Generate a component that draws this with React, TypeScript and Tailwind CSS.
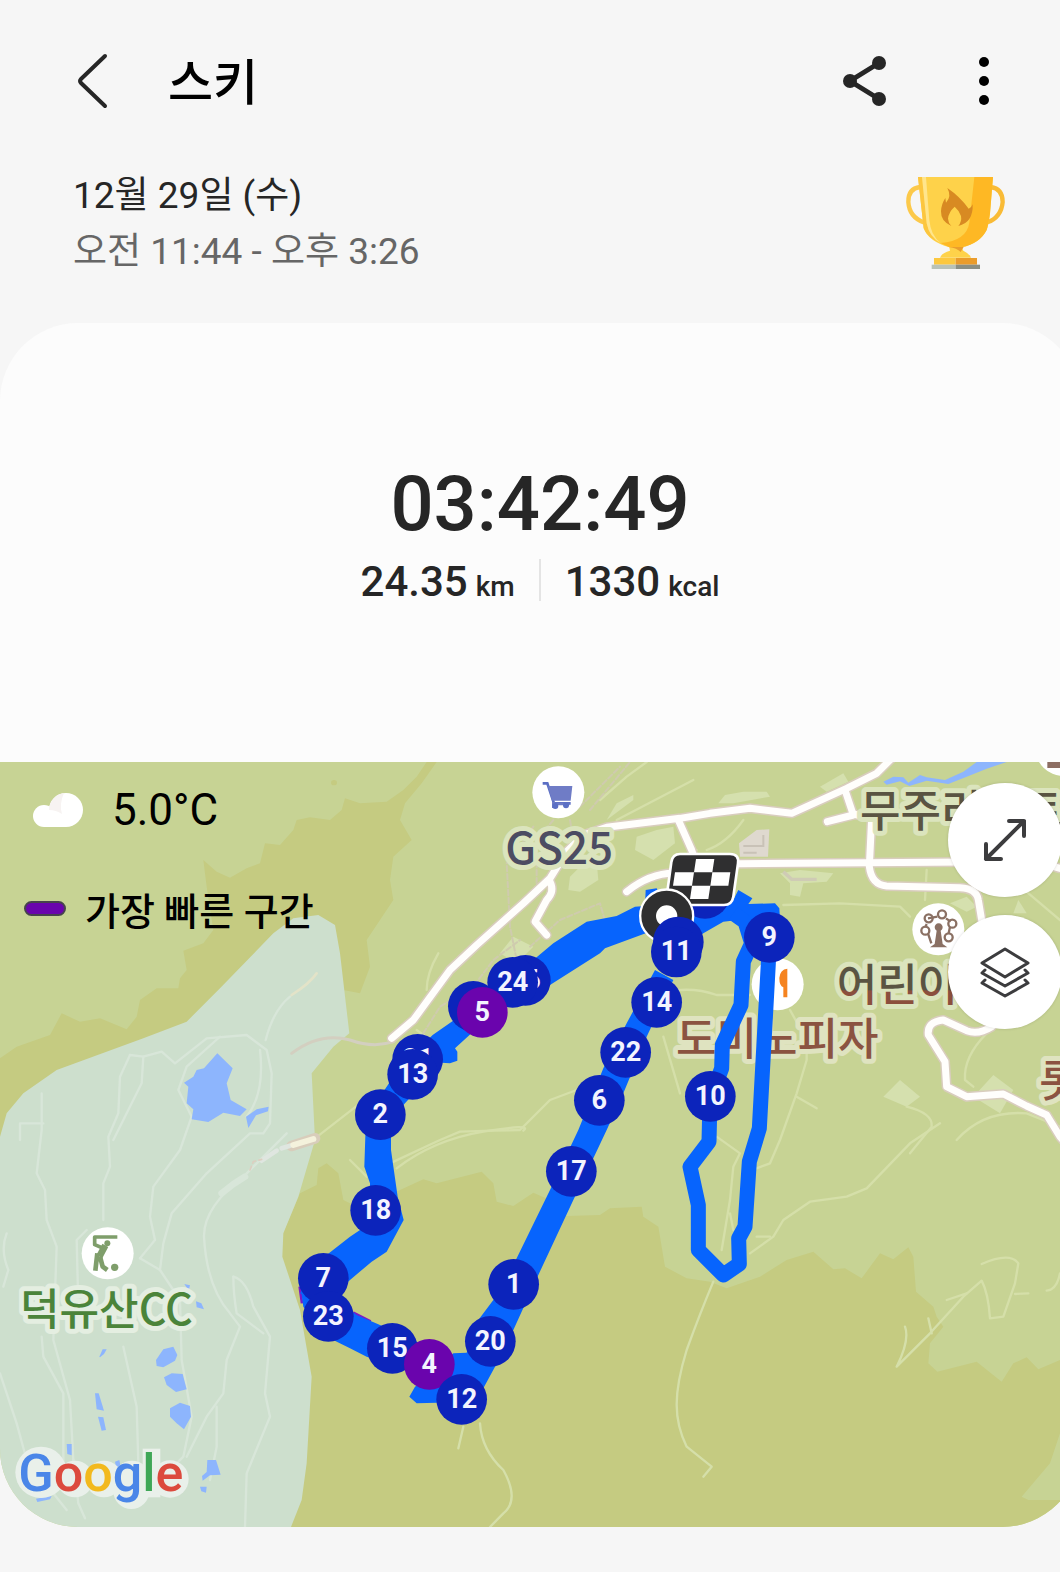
import React from "react";

/* The map is drawn on a canvas of 3240 x 2295 units, three units to a pixel. */

type Poly = string;

const KHAKI: Poly[] = [
  "0,955 50,920 150,885 185,820 240,845 300,835 380,868 410,830 420,780 470,745 535,745 540,715 560,690 550,632 610,610 640,570 620,440 610,360 650,395 690,413 740,385 780,370 795,310 840,315 880,270 890,240 930,232 990,240 1025,210 1035,175 1080,190 1160,185 1210,150 1250,110 1280,66 1310,66 1265,130 1215,190 1200,240 1235,300 1180,350 1170,420 1180,480 1140,540 1100,600 1110,680 1080,760 1030,750 900,1000 0,1250",
  "840,1500 900,1360 950,1335 955,1285 980,1270 1015,1300 1030,1380 1080,1405 1200,1350 1270,1318 1310,1330 1445,1295 1480,1330 1490,1385 1540,1398 1600,1358 1650,1380 1700,1428 1800,1425 1830,1405 1925,1400 1930,1430 1975,1460 1995,1580 2060,1615 2130,1625 2180,1645 2280,1610 2360,1560 2440,1535 2500,1588 2535,1585 2585,1615 2640,1540 2680,1558 2725,1522 2740,1550 2748,1655 2800,1700 2810,1730 2830,1760 2790,1810 2785,1870 2812,1895 2930,1865 3005,1925 3040,1870 3080,1852 3115,1888 3180,1860 3240,1850 3240,2361 870,2361 840,2300",
];

const GOLF: Poly =
  "0,1190 20,1120 70,1060 170,990 430,895 560,845 660,745 820,580 880,535 955,525 1005,555 1020,640 1048,880 1000,920 935,1000 945,1200 895,1370 850,1480 847,1550 900,1710 935,1910 920,2170 905,2280 873,2361 0,2361";

const GROVES: Poly[] = [
  "1820,240 1900,180 1900,165 1850,190",
  "1910,290 1970,270 2020,260 2025,310 1960,360 1905,330",
  "1710,410 1740,380 1790,365 1795,420 1740,455 1705,450",
  "1500,640 1540,590 1600,620 1550,670",
  "2155,190 2175,165 2230,155 2300,155 2310,170 2200,190",
  "2460,140 2530,100 2545,125 2480,155",
  "2340,400 2400,390 2500,400 2480,425 2410,430 2400,470 2370,465 2370,430",
  "2650,1070 2700,1020 2760,1070 2720,1100",
  "2920,1070 2980,1005 3040,1050 3000,1120",
  "2850,490 2900,470 2930,500 2900,515",
  "3040,520 3055,480 3080,520",
];

const TRAILS = [
  "M1380 895 L1290 900 1250 870",
  "M1190 1285 Q1300 1200 1450 1175 T1570 1172",
  "M1050 1260 L1100 1310",
  "M945 1195 L1080 1090 1130 1060",
  "M1170 1270 L1320 1200 1380 1175 1480 1172 1560 1170 1650 1080 1730 1050",
  "M1280 750 Q1280 700 1315 640",
  "M1990 890 L2040 1060",
  "M2000 755 Q2080 740 2150 765 L2250 765",
  "M2350 495 L2520 490 2700 500 2730 530",
  "M2230 240 Q2180 310 2120 330",
  "M2370 810 L2420 900 2420 960 2390 1060 2340 1200 2310 1270 2270 1285",
  "M2390 1070 L2450 1105",
  "M2150 1190 L2220 1240 2200 1280 2190 1380 2165 1530 M2190 1420 L2200 1470",
  "M2250 1540 L2320 1490 2350 1440 2430 1385 2540 1370 2600 1345 2730 1210 2820 1150",
  "M2270 1490 L2310 1490",
  "M2140 1625 Q2100 1720 2060 1830 C2020 1960 2020 2040 2060 2120 Q2110 2160 2135 2180 L2110 2210",
  "M1440 2050 Q1445 2130 1510 2190 Q1560 2280 1510 2320 L1470 2361",
  "M1390 2060 L1375 2125",
  "M2715 1760 Q2730 1800 2690 1880 L2790 1780 2890 1670 2945 1622 Q2965 1660 2970 1735 L3010 1730 3045 1630 3055 1570 Q3030 1535 2945 1572",
  "M2840 1680 L2900 1660 M2785 1735 L2795 1780 M3045 1662 L3085 1660",
  "M3180 1600 Q3170 1650 3140 1652",
  "M2960 880 Q2890 950 2895 1020 L2920 1040",
  "M2720 1100 Q2800 1120 2795 1160 L2730 1240",
  "M2870 1200 Q2950 1110 3080 1120 L3180 1160",
  "M1800 180 L1880 110 1940 66 M1850 240 L2080 120",
  "M2050 370 L2090 330 M2780 390 L2775 480",
  "M3050 430 L3180 540",
];

const DASHED = [
  "M1740 200 L1860 80 M1770 210 L1890 66",
  "M1600 260 L1560 320 1520 370 1530 560 1550 660",
  "M1660 240 L1610 300 1610 430 M1710 240 L1720 300",
  "M1270 880 L1320 800 1420 740 1480 660 1560 600",
  "M1590 620 L1680 540 1800 490 1820 560",
];

const GOLF_PATHS = [
  "M60 1200 V1150 H130 M125 1060 V1170 L110 1300 135 1350 140 1440 170 1520 160 1800 210 1980 220 2160",
  "M390 945 L360 1010 355 1120 325 1190 330 1280 310 1330 310 1440",
  "M430 950 L425 1030 380 1120 340 1200",
  "M390 945 L430 950 485 935 525 970 620 895 740 885 800 930 815 1000 810 1150 790 1180 750 1180 620 1300 515 1420 490 1510 480 1590 420 1555",
  "M660 890 L560 980 535 1050 575 1130 540 1230 460 1340 450 1430 465 1500 420 1555",
  "M780 930 Q795 1060 740 1130",
  "M797 900 Q820 810 870 770",
  "M860 1180 L740 1300 Q610 1400 612 1490 Q620 1640 690 1720 L720 1760 680 1860 670 1960 620 2030 560 2150",
  "M700 1610 Q740 1620 760 1700 L810 1790 795 1960 810 2030 740 2200 735 2361",
  "M700 1610 Q700 1660 710 1720 L790 1780",
  "M125 1790 L130 1850 190 1960 190 2200",
  "M370 1820 L410 2000 415 2170",
  "M480 1590 L540 1680 545 1860 575 2030 550 2150 500 2200",
  "M20 1480 Q0 1530 25 1590 L10 1640",
  "M0 1900 L50 2050 80 2160 200 2310",
  "M235 1700 L230 1500 260 1470",
  "M220 2160 L235 2290 255 2335",
  "M650 2000 L650 2120 630 2220",
];

const LAKES: Poly[] = [
  "652,940 698,985 680,1030 692,1080 740,1108 720,1128 670,1118 625,1146 575,1138 580,1108 560,1090 565,1040 552,1028 580,1010 590,990 612,985",
  "738,1130 770,1108 806,1100 804,1114 768,1126 745,1164",
  "468,1860 490,1828 520,1820 532,1845 525,1862 490,1882 470,1878",
  "492,1912 515,1900 548,1902 560,1948 528,1956 500,1935",
  "510,2005 540,1988 570,1998 573,2030 552,2068 530,2050 510,2030",
  "285,1960 296,1960 312,2012 290,2008",
  "294,2030 310,2032 318,2070 305,2072",
  "298,1850 308,1828 320,1828 312,1842 300,1852",
  "200,2112 215,2112 215,2146 202,2142",
  "622,2160 648,2160 662,2204 630,2206 608,2222 606,2208 620,2196",
  "600,2240 620,2240 618,2258 604,2254",
  "345,2165 358,2160 362,2180 348,2180",
  "108,2276 155,2268 150,2278 112,2286",
  "553,1632 570,1636 566,1652",
  "588,1684 604,1690 612,1708 590,1702",
  "2650,125 2680,110 2710,112 2725,128 2760,105 2780,112 2835,120 2890,95 2930,66 3020,66 2960,86 2900,110 2845,132 2780,122 2728,138 2700,124 2660,134",
];

const ROADS = [
  "M1175 895 L1240 840 1350 690 1430 615 1570 490 1650 415 1700 335 1750 285 1820 262 2040 235 2130 220 2250 205 2375 220 2540 145 2630 100 2680 50",
  "M1650 425 Q1665 455 1640 480 L1605 545 1640 585",
  "M2035 240 L2075 330 2085 360",
  "M1880 455 Q1950 400 2020 400 L2080 405",
  "M2150 372 L2600 368 2900 366 3100 362 3180 385",
  "M2535 150 L2560 225 2482 245",
  "M2560 222 L2615 235 2608 380 Q2615 435 2660 438 L2880 443 Q2930 445 2935 480 L2945 540 2960 600",
  "M2975 860 Q2935 885 2900 872 L2830 840 Q2780 845 2785 885 L2835 965 2840 1040 2900 1070 3010 1062 3080 1098 3140 1125 3180 1190 3240 1260",
];

const ROUTE: Poly[] = [
  "1600,660 1660,610 1760,545 1850,528 1905,500 1935,498 1937,450 1970,445 1985,480 2060,480 2200,480 2215,450 2257,475 2245,492 2325,490 2338,505 2340,540 2240,545 2215,540 2170,545 2110,580 2060,620 1990,560 1815,625 1800,640 1650,735 1570,760",
  "1298,885 1420,800 1480,820 1365,925 1372,935 1372,962 1350,970 1325,968 1215,1090 1150,1160 1120,1100 1200,980",
  "1097,1160 1173,1160 1173,1230 1193,1370 1211,1440 1160,1535 1115,1565 1050,1620 975,1690 900,1660 980,1545 1050,1490 1110,1450 1110,1330 1093,1280",
  "900,1630 960,1640 1070,1725 1140,1755 1260,1810 1260,1900 1100,1850 1050,1825 980,1790 910,1700",
  "1965,690 1880,850 1810,985 1735,1170 1650,1350 1550,1555 1480,1680 1435,1740 1400,1838 1360,1840 1300,1900 1245,1940 1228,1970 1250,1990 1310,1988 1400,2010 1450,1945 1485,1880 1540,1770 1615,1605 1720,1380 1780,1255 1820,1170 1870,1060 1940,890 2020,720",
];

const LOOP =
  "2200,520 2235,545 2255,610 2230,665 2223,795 2167,915 2165,985 2130,1080 2127,1205 2070,1280 2095,1395 2095,1530 2170,1605 2218,1572 2216,1495 2235,1460 2248,1265 2278,1165 2305,670 2312,520";

type Lap = { n: string; x: number; y: number; fast?: boolean };

const LAPS: Lap[] = [
  { n: "", x: 2035, y: 606 },
  { n: "11", x: 2029, y: 636 },
  { n: "9", x: 2308, y: 592 },
  { n: "14", x: 1970, y: 787 },
  { n: "22", x: 1877, y: 937 },
  { n: "6", x: 1798, y: 1081 },
  { n: "17", x: 1714, y: 1294 },
  { n: "1", x: 1541, y: 1633 },
  { n: "20", x: 1471, y: 1804 },
  { n: "15", x: 1177, y: 1825 },
  { n: "4", x: 1288, y: 1873, fast: true },
  { n: "12", x: 1385, y: 1978 },
  { n: "7", x: 970, y: 1615 },
  { n: "23", x: 985, y: 1729 },
  { n: "18", x: 1127, y: 1411 },
  { n: "2", x: 1141, y: 1124 },
  { n: "21", x: 1253, y: 958 },
  { n: "13", x: 1238, y: 1003 },
  { n: "16", x: 1576, y: 721 },
  { n: "24", x: 1538, y: 727 },
  { n: "", x: 1420, y: 799 },
  { n: "5", x: 1447, y: 817, fast: true },
  { n: "10", x: 2131, y: 1069 },
];

function LapMarker({ n, x, y, fast }: Lap) {
  return (
    <g>
      <circle cx={x} cy={y} r={76} fill={fast ? "#6a04ad" : "#0c24bb"} />
      <text x={x} y={y + 25} fontSize={81} textAnchor="middle" className="fill-[#f3f4ff] font-bold">
        {n}
      </text>
    </g>
  );
}

function PlaceLabel(props: { x: number; y: number; fill: string; halo: string; size?: number; children: string }) {
  return (
    <text
      x={props.x}
      y={props.y}
      fontSize={props.size ?? 132}
      fill={props.fill}
      stroke={props.halo}
      strokeWidth={30}
      strokeLinejoin="round"
      className="font-['Noto_Sans_CJK_KR',sans-serif] font-medium [paint-order:stroke]"
    >
      {props.children}
    </text>
  );
}

function Places() {
  return (
    <g>
      <PlaceLabel x={1516} y={372} fill="#4c4c62" halo="#dbe4bd">GS25</PlaceLabel>
      <circle cx={1675} cy={157} r={78} fill="#fff" />
      <path d="M1628 130 h14 l20 60 h50" fill="none" stroke="#5b6fc4" strokeWidth={8} />
      <path d="M1644 138 h73 l-5 44 h-56 z M1658 188 h50 v8 h-50 z M1656 186 h8 v18 h-8z" fill="#6f7cc6" />
      <circle cx={1666} cy={198} r={9} fill="#5b6fc4" />
      <circle cx={1698} cy={196} r={9} fill="#5b6fc4" />

      <PlaceLabel x={2580} y={260} fill="#5a5442" halo="#dbe4bd">무주리조트</PlaceLabel>
      <circle cx={3190} cy={24} r={84} fill="#fff" />
      <rect x={3142} y={56} width={50} height={28} fill="#8d6e63" />

      <PlaceLabel x={2510} y={783} fill="url(#kids)" halo="#dbe4bd">어린이</PlaceLabel>
      <circle cx={2815} cy={568} r={78} fill="#fff" />
      <g fill="none" stroke="#8a7063" strokeWidth={7}>
        <path d="M2784 535 L2812 530 M2838 535 L2852 545 M2780 552 L2776 562 M2850 560 L2846 580 M2784 580 L2794 610" />
        <circle cx={2826} cy={523} r={12} />
        <circle cx={2786} cy={535} r={12} />
        <circle cx={2776} cy={572} r={12} />
        <circle cx={2857} cy={551} r={12} />
        <circle cx={2846} cy={592} r={12} />
      </g>
      <path d="M2790 622 L2804 612 2810 572 A12 12 0 1 1 2822 572 L2828 612 2842 622 Z" fill="#8a7063" />

      <PlaceLabel x={2028} y={946} fill="#8b5341" halo="#dfe3c0">도미노피자</PlaceLabel>
      <circle cx={2333} cy={733} r={78} fill="#fff" />
      <path d="M2362 686 v86 h-12 v-30 q-12 -4 -12 -28 q2 -26 24 -28z" fill="#f5831f" />
      <path d="M2290 690 v26 q0 14 12 14 v42" fill="none" stroke="#f5831f" strokeWidth={12} />

      <PlaceLabel x={3118} y={1072} fill="#8b5341" halo="#dfe3c0">롯</PlaceLabel>

      <PlaceLabel x={60} y={1754} size={129} fill="#4b843a" halo="#e4eee1">덕유산CC</PlaceLabel>
      <circle cx={323} cy={1540} r={78} fill="#fff" />
      <g fill="none" stroke="#7f9e6b" strokeWidth={11} strokeLinejoin="round">
        <path d="M352 1491 H284 V1514 L308 1524" />
        <path d="M316 1516 L298 1550" strokeWidth={20} />
        <path d="M292 1540 L286 1592 M300 1550 L308 1580 322 1590" strokeWidth={14} />
      </g>
      <circle cx={322} cy={1510} r={9} fill="#7f9e6b" />
      <circle cx={344} cy={1582} r={11} fill="#7f9e6b" />
    </g>
  );
}

function GoogleMark() {
  return (
    <g>
      <g fill="#e9f0ea">
        <circle cx={123} cy={2197} r={77} />
        <circle cx={225} cy={2217} r={55} />
        <circle cx={312} cy={2217} r={55} />
        <circle cx={396} cy={2217} r={55} />
        <circle cx={394} cy={2253} r={54} />
        <rect x={428} y={2126} width={53} height={146} />
        <circle cx={510} cy={2217} r={56} />
      </g>
      <text x={55} y={2253} fontSize={156} className="font-['Roboto',sans-serif] font-medium">
        <tspan fill="#4a86e8">G</tspan>
        <tspan fill="#dc4a3d">o</tspan>
        <tspan fill="#f2b91d">o</tspan>
        <tspan fill="#4a86e8">g</tspan>
        <tspan fill="#3fa757">l</tspan>
        <tspan fill="#dc4a3d">e</tspan>
      </text>
    </g>
  );
}

function TrackMap() {
  return (
    <svg
      viewBox="0 66 3240 2295"
      preserveAspectRatio="xMinYMin slice"
      className="absolute inset-0 h-full w-full font-['Roboto',sans-serif]"
      role="img"
      aria-label="스키 이동 경로 지도"
    >
      <defs>
        <linearGradient id="kids" gradientUnits="userSpaceOnUse" x1={0} y1={749} x2={0} y2={753}>
          <stop offset="0" stopColor="#5a5442" />
          <stop offset="1" stopColor="#8b4f3d" />
        </linearGradient>
      </defs>
      <rect y={66} width={3240} height={2295} fill="#c7d394" />
      <g fill="#c5cb81">
        {KHAKI.map((p) => <polygon key={p} points={p} />)}
        <ellipse cx={1002} cy={128} rx={9} ry={8} />
      </g>
      <polygon points="3065,2270 3150,2170 3180,2080 3240,2050 3240,2280 3085,2280" fill="#c7d394" />
      <polygon points={GOLF} fill="#cddfcd" />
      <g fill="#d5e0ae">{GROVES.map((p) => <polygon key={p} points={p} />)}</g>
      <g fill="none" strokeLinejoin="round" strokeLinecap="round">
        <g stroke="#d8e6d9" strokeWidth={7}>{GOLF_PATHS.map((d) => <path key={d} d={d} />)}</g>
        <g stroke="#d5dfa9" strokeWidth={7}>{TRAILS.map((d) => <path key={d} d={d} />)}</g>
        <g stroke="#cfcbae" strokeWidth={6} strokeDasharray="16 8">{DASHED.map((d) => <path key={d} d={d} />)}</g>
        <path d="M875 940 Q960 875 1050 900 Q1120 925 1180 905" stroke="#d3cfc0" strokeWidth={9} />
        <path d="M875 765 Q930 730 950 700" stroke="#e3e3c8" strokeWidth={8} />
        <path d="M875 1218 L945 1195" stroke="#d8cdbb" strokeWidth={32} />
        <path d="M785 1262 L830 1232 M845 1225 L870 1217" stroke="#dfe6e0" strokeWidth={14} />
        <path d="M880 1215 L940 1197" stroke="#f4f2dc" strokeWidth={18} />
        <path d="M750 1290 L760 1265 785 1258" stroke="#dccfc0" strokeWidth={5} strokeDasharray="12 10" />
        <path d="M665 1360 Q700 1330 735 1310" stroke="#d8e6d9" strokeWidth={20} />
      </g>
      <g fill="#8db5fd">{LAKES.map((p) => <polygon key={p} points={p} />)}</g>
      <path d="M2217 310 L2270 270 2308 268 2304 350 2220 350 Z" fill="#dfd9cf" />
      <path d="M2230 318 H2290 V285 M2230 338 H2270" fill="none" stroke="#c9c2b7" strokeWidth={6} />
      <path d="M2350 395 L2375 418 H2450" fill="none" stroke="#cfcbb5" strokeWidth={10} />
      <g fill="none" strokeLinejoin="round" strokeLinecap="round">
        <g stroke="#d9cdbe" strokeWidth={30}>{ROADS.map((d) => <path key={d} d={d} />)}</g>
        <g stroke="#fffefc" strokeWidth={21}>{ROADS.map((d) => <path key={d} d={d} />)}</g>
      </g>

      <Places />

      <path d="M899 1640 L906 1690 M1060 1718 L1112 1744" stroke="#7d1bc8" strokeWidth={8} />
      <g fill="#0764fd">{ROUTE.map((p) => <polygon key={p} points={p} />)}</g>
      <polyline points={LOOP} fill="none" stroke="#0764fd" strokeWidth={45} strokeLinejoin="round" />

      <circle cx={2115} cy={460} r={76} fill="#0c24bb" />
      <path
        d="M2040 342 H2190 Q2218 342 2214 370 L2200 470 Q2196 495 2172 495 H2020 Q1996 495 2000 470 L2014 366 Q2018 342 2040 342Z"
        fill="#2f2f30"
        stroke="#fff"
        strokeWidth={8}
      />
      <path
        d="M2088 357 H2143 L2137 397 H2082Z M2025 397 H2082 L2076 437 H2019Z M2137 397 H2191 L2185 437 H2131Z M2076 437 H2131 L2125 477 H2070Z"
        fill="#fff"
      />
      <circle cx={2000} cy={528} r={56} fill="none" stroke="#fff" strokeWidth={54} />
      <circle cx={2000} cy={528} r={54} fill="#fff" stroke="#2f2f30" strokeWidth={44} />

      {LAPS.map((lap) => <LapMarker key={`${lap.x}-${lap.y}`} {...lap} />)}

      <GoogleMark />
    </svg>
  );
}

function Trophy() {
  return (
    <svg viewBox="375 525 303 285" className="h-[95px] w-[101px]" role="img" aria-label="트로피">
      <g fill="none" strokeWidth={13}>
        <path d="M420 561 Q384 566 385 606 Q388 652 432 667" stroke="#fcc94a" />
        <path d="M632 561 Q668 566 668 606 Q664 652 622 667" stroke="#f9bb36" />
      </g>
      <path d="M414 531 H639 L630 640 Q626 672 620 690 Q600 730 545 742 L550 752 Q570 762 573 773 H480 Q486 758 510 752 L508 742 Q445 724 431 685 Z" fill="#fed24a" />
      <path d="M583 531 H639 L630 640 Q626 672 620 690 Q600 730 545 742 H508 L482 729 Q560 722 568 668 Z" fill="#feb824" />
      <path d="M414 531 H426 L440 670 Q448 712 482 729 Q442 714 431 685Z" fill="#fcc63f" />
      <path d="M426 531 H438 L448 660 Q452 706 482 729 Q448 712 440 670Z" fill="#ffe58c" />
      <path d="M508 741 H551 L542 756 Q530 744 508 741Z" fill="#ea9e2d" />
      <path d="M502 564 Q540 590 566 626 Q574 624 578 613 Q580 668 535 678 Q546 664 543 648 Q538 632 524 620 Q506 636 504 656 Q505 670 514 678 Q482 664 483 634 Q484 612 496 594 L498 608 Q516 590 502 564Z" fill="#d88a22" />
      <path d="M462 774 H527 V794 H462Z" fill="#fcc83f" />
      <path d="M527 774 H591 V794 H527Z" fill="#ea9c2b" />
      <path d="M455 794 H527 V807 H455Z" fill="#b9c2b8" />
      <path d="M527 794 H600 V807 H527Z" fill="#8b8f83" />
    </svg>
  );
}

function MapButton({ label, children }: { label: string; children: React.ReactNode }) {
  return (
    <button
      type="button"
      aria-label={label}
      className="flex size-[114px] items-center justify-center rounded-full bg-white text-[#3c3c3e] shadow-[0_0_3px_rgba(0,0,0,0.15)]"
    >
      {children}
    </button>
  );
}

function Stat({ value, unit }: { value: string; unit: string }) {
  return (
    <p className="pt-2 text-[42px] leading-[42px]">
      {value}
      <span className="ml-2 text-[28px]">{unit}</span>
    </p>
  );
}

export default function App() {
  return (
    <div className="min-h-screen overflow-hidden bg-[#f6f6f6] pb-[45px] font-['Roboto','Noto_Sans_CJK_KR',sans-serif] text-[#262626]">
      <header className="mt-[53px] flex h-14 items-center pr-[61px] pl-[78px]">
        <button type="button" aria-label="뒤로" className="shrink-0">
          <svg viewBox="0 0 30 56" className="h-14 w-[30px]" fill="none" stroke="#262626" strokeWidth={4} strokeLinecap="round" strokeLinejoin="round">
            <path d="M27 3 L3 26 Q1 28 3 30 L27 53" />
          </svg>
        </button>
        <h1 className="ml-[60px] flex-1 pt-1.5 text-[49px] leading-14 font-medium text-black">스키</h1>
        <button type="button" aria-label="공유">
          <svg viewBox="0 0 44 50" className="h-[50px] w-11" fill="#262626">
            <path d="M36 7 L7 25 36 43" fill="none" stroke="#262626" strokeWidth={5} />
            <circle cx={36} cy={7} r={7} />
            <circle cx={7} cy={25} r={7} />
            <circle cx={36} cy={43} r={7} />
          </svg>
        </button>
        <button type="button" aria-label="더보기" className="ml-[82px]">
          <svg viewBox="0 0 30 50" className="h-[50px] w-[30px]" fill="#000">
            <circle cx={15} cy={6} r={5} />
            <circle cx={15} cy={25} r={5} />
            <circle cx={15} cy={44} r={5} />
          </svg>
        </button>
      </header>

      <div className="mt-[59px] flex items-start justify-between pr-[54px] pb-[43px] pl-[73px] text-[37px] leading-14">
        <div>
          <p>12월 29일 (수)</p>
          <p className="text-[#666]">오전 11:44 - 오후 3:26</p>
        </div>
        <div className="pt-[7px]">
          <Trophy />
        </div>
      </div>

      <main className="-mr-5 overflow-hidden rounded-[78px] bg-[#fcfcfc]">
        <section className="flex flex-col items-center gap-[15px] pt-[141px] pb-[161px] font-medium">
          <p className="text-[76px] leading-20">03:42:49</p>
          <div className="flex h-[42px] items-center">
            <Stat value="24.35" unit="km" />
            <span className="mx-6 h-full w-0.5 bg-[#e4e4e4]" />
            <Stat value="1330" unit="kcal" />
          </div>
        </section>

        <section className="relative h-[765px] text-black">
          <TrackMap />
          <div className="relative flex justify-between pt-[21px] pr-[18px] pl-6">
            <div>
              <div className="flex items-center pl-2">
                <svg viewBox="0 0 52 36" className="h-9 w-[52px]" aria-hidden="true">
                  <path d="M12 35 A11 11 0 1 1 17 13 A17 17 0 1 1 40 35 Z" fill="none" />
                  <circle cx={12} cy={24} r={11} fill="#fff" />
                  <circle cx={34} cy={18} r={17} fill="#fff" />
                  <rect x={12} y={20} width={22} height={15} fill="#fff" />
                  <path d="M17 18 A17 17 0 0 1 32 1 Q27 12 30 22 Q24 18 17 18Z" fill="#f7f3f2" />
                </svg>
                <span className="ml-7 text-[44px] leading-[54px]">5.0°C</span>
              </div>
              <div className="mt-12 flex items-center">
                <span className="mb-2 h-[15px] w-[42px] rounded-full border-2 border-[#47434d] bg-[#6a04ad]" />
                <span className="ml-[19px] text-[38px] leading-[54px] font-medium">가장 빠른 구간</span>
              </div>
            </div>
            <div className="flex flex-col gap-[18px]">
              <MapButton label="지도 확대">
                <svg viewBox="0 0 44 44" className="size-11" fill="none" stroke="currentColor" strokeWidth={4} strokeLinecap="round" strokeLinejoin="round">
                  <path d="M3 41 L41 3 M26 3 H41 V18 M3 26 V41 H18" />
                </svg>
              </MapButton>
              <MapButton label="지도 유형">
                <svg viewBox="0 0 50 52" className="h-[52px] w-[50px]" fill="none" stroke="currentColor" strokeWidth={3} strokeLinecap="round" strokeLinejoin="round">
                  <path d="M25 3 L48 17 25 31 2 17 Z" />
                  <path d="M5 24 L2 27 25 40 48 27 45 24 M5 34 L2 37 25 50 48 37 45 34" />
                </svg>
              </MapButton>
            </div>
          </div>
        </section>
      </main>
    </div>
  );
}
